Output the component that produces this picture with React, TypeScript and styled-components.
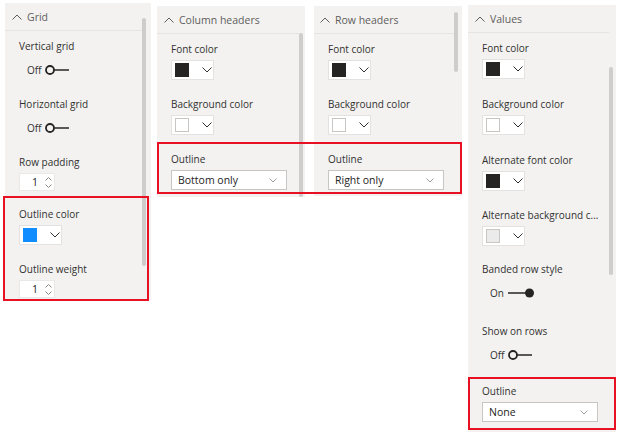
import React from "react";
import styled, { createGlobalStyle } from "styled-components";

const Global = createGlobalStyle`
  html, body { margin: 0; padding: 0; background: #ffffff; }
  body {
    font-family: "Open Sans", "Noto Sans", sans-serif;
    width: 626px;
    height: 442px;
    overflow: hidden;
  }
`;

const Page = styled.div`
  position: relative;
  display: flex;
  align-items: flex-start;
  width: 626px;
  height: 442px;
  padding-left: 5px;
  box-sizing: border-box;
`;

const PanelBox = styled.section<{ $w: number; $h: number; $top: number; $gap: number; $pr: number }>`
  display: flex;
  flex-shrink: 0;
  width: ${(p) => p.$w}px;
  height: ${(p) => p.$h}px;
  margin-top: ${(p) => p.$top}px;
  margin-left: ${(p) => p.$gap}px;
  padding-right: ${(p) => p.$pr}px;
  background: #f3f2f1;
  box-sizing: border-box;
`;

const Main = styled.div`
  flex: 1;
  min-width: 0;
  display: flex;
  flex-direction: column;
`;

const Header = styled.div<{ $pl: number }>`
  display: flex;
  align-items: center;
  gap: 5px;
  height: 27px;
  padding-left: ${(p) => p.$pl}px;
  border-bottom: 1px solid #e6e4e2;
  color: #605e5c;
  font-size: 10.5px;
  white-space: nowrap;
`;

const Content = styled.div`
  display: flex;
  flex-direction: column;
  padding: 8px 0 0 14px;
`;

const Field = styled.div<{ $mb: number }>`
  display: flex;
  flex-direction: column;
  align-items: flex-start;
  margin-bottom: ${(p) => p.$mb}px;
`;

const Label = styled.div`
  font-size: 10px;
  line-height: 14px;
  color: #323130;
  white-space: nowrap;
  margin-bottom: 4px;
`;

const Track = styled.div`
  width: 4px;
  display: flex;
  flex-direction: column;
`;

const Thumb = styled.div<{ $offset: number; $len: number }>`
  margin-top: ${(p) => p.$offset}px;
  height: ${(p) => p.$len}px;
  width: 4px;
  border-radius: 2px;
  background: #cfcdcb;
`;

const Picker = styled.div`
  display: flex;
  align-items: center;
  width: 43px;
  height: 20px;
  box-sizing: border-box;
  background: #ffffff;
  border: 1px solid #e4e2e0;
  padding-left: 3px;
  gap: 13px;
`;

const Swatch = styled.div<{ $color: string; $edge: string }>`
  width: 14px;
  height: 14px;
  box-sizing: border-box;
  background: ${(p) => p.$color};
  border: 1px solid ${(p) => p.$edge};
`;

const Dropdown = styled.div`
  display: flex;
  align-items: center;
  justify-content: space-between;
  width: 116px;
  height: 20px;
  box-sizing: border-box;
  background: #ffffff;
  border: 1px solid #c8c6c4;
  padding: 0 9px 0 6px;
  font-size: 10.5px;
  color: #252423;
  white-space: nowrap;
`;

const Spinner = styled.div`
  display: flex;
  align-items: center;
  justify-content: space-between;
  width: 36px;
  height: 18px;
  box-sizing: border-box;
  background: #ffffff;
  border: 1px solid #eae8e6;
  padding: 0 2px 0 12px;
  font-size: 10.5px;
  color: #252423;
`;

const Arrows = styled.div`
  display: flex;
  flex-direction: column;
  gap: 3px;
`;

const Toggle = styled.div`
  display: flex;
  align-items: center;
  gap: 3px;
  height: 16px;
  margin: 5px 0 0 8px;
  font-size: 10px;
  color: #323130;
`;

const RedBox = styled.div<{ $x: number; $y: number; $w: number; $h: number }>`
  position: absolute;
  left: ${(p) => p.$x}px;
  top: ${(p) => p.$y}px;
  width: ${(p) => p.$w}px;
  height: ${(p) => p.$h}px;
  box-sizing: border-box;
  border: 2px solid #e81123;
  pointer-events: none;
`;

const ChevronUp = () => (
  <svg width="10" height="6" viewBox="0 0 10 6">
    <polyline points="0.5,5.5 5,1 9.5,5.5" fill="none" stroke="#605e5c" strokeWidth="1" />
  </svg>
);

const ChevronDown = ({ color = "#323130", w = 10, h = 6 }: { color?: string; w?: number; h?: number }) => (
  <svg width={w} height={h} viewBox={`0 0 ${w} ${h}`}>
    <polyline points={`0.5,0.5 ${w / 2},${h - 1} ${w - 0.5},0.5`} fill="none" stroke={color} strokeWidth="1" />
  </svg>
);

const SmallArrow = ({ up }: { up?: boolean }) => (
  <svg width="7" height="4" viewBox="0 0 7 4">
    <polyline
      points={up ? "0.5,3.5 3.5,0.5 6.5,3.5" : "0.5,0.5 3.5,3.5 6.5,0.5"}
      fill="none"
      stroke="#8a8886"
      strokeWidth="1"
    />
  </svg>
);

const SwitchIcon = ({ on }: { on?: boolean }) =>
  on ? (
    <svg width="28" height="10" viewBox="0 0 28 10">
      <line x1="1" y1="5" x2="21" y2="5" stroke="#252423" strokeWidth="1.5" />
      <circle cx="22.5" cy="5" r="4.5" fill="#252423" />
    </svg>
  ) : (
    <svg width="25" height="10" viewBox="0 0 25 10">
      <circle cx="5" cy="5" r="4" fill="none" stroke="#252423" strokeWidth="1.8" />
      <line x1="9" y1="5" x2="24" y2="5" stroke="#252423" strokeWidth="1.5" />
    </svg>
  );

type Item =
  | { kind: "picker"; label: string; color: string; edge: string; mb: number }
  | { kind: "toggle"; label: string; on: boolean; mb: number }
  | { kind: "spin"; label: string; value: string; mb: number }
  | { kind: "select"; label: string; value: string; mb: number };

type PanelDef = {
  title: string;
  w: number;
  h: number;
  top: number;
  gap: number;
  pr: number;
  headPl: number;
  thumb: [number, number];
  items: Item[];
};

const panels: PanelDef[] = [
  {
    title: "Grid",
    w: 146,
    h: 297,
    top: 3,
    gap: 0,
    pr: 5,
    headPl: 7,
    thumb: [15, 248],
    items: [
      { kind: "toggle", label: "Vertical grid", on: false, mb: 19 },
      { kind: "toggle", label: "Horizontal grid", on: false, mb: 19 },
      { kind: "spin", label: "Row padding", value: "1", mb: 16 },
      { kind: "picker", label: "Outline color", color: "#118dff", edge: "#118dff", mb: 17 },
      { kind: "spin", label: "Outline weight", value: "1", mb: 0 },
    ],
  },
  {
    title: "Column headers",
    w: 148,
    h: 191,
    top: 6,
    gap: 6,
    pr: 2,
    headPl: 7,
    thumb: [27, 164],
    items: [
      { kind: "picker", label: "Font color", color: "#252423", edge: "#252423", mb: 17 },
      { kind: "picker", label: "Background color", color: "#ffffff", edge: "#c8c6c4", mb: 17 },
      { kind: "select", label: "Outline", value: "Bottom only", mb: 0 },
    ],
  },
  {
    title: "Row headers",
    w: 148,
    h: 190,
    top: 6,
    gap: 9,
    pr: 4,
    headPl: 6,
    thumb: [6, 60],
    items: [
      { kind: "picker", label: "Font color", color: "#252423", edge: "#252423", mb: 17 },
      { kind: "picker", label: "Background color", color: "#ffffff", edge: "#c8c6c4", mb: 17 },
      { kind: "select", label: "Outline", value: "Right only", mb: 0 },
    ],
  },
  {
    title: "Values",
    w: 148,
    h: 427,
    top: 5,
    gap: 6,
    pr: 3,
    headPl: 7,
    thumb: [62, 208],
    items: [
      { kind: "picker", label: "Font color", color: "#252423", edge: "#252423", mb: 18 },
      { kind: "picker", label: "Background color", color: "#ffffff", edge: "#c8c6c4", mb: 18 },
      { kind: "picker", label: "Alternate font color", color: "#252423", edge: "#252423", mb: 17 },
      { kind: "picker", label: "Alternate background c...", color: "#ebebeb", edge: "#c8c6c4", mb: 16 },
      { kind: "toggle", label: "Banded row style", on: true, mb: 23 },
      { kind: "toggle", label: "Show on rows", on: false, mb: 21 },
      { kind: "select", label: "Outline", value: "None", mb: 0 },
    ],
  },
];

const Control = ({ item }: { item: Item }) => {
  switch (item.kind) {
    case "picker":
      return (
        <Picker>
          <Swatch $color={item.color} $edge={item.edge} />
          <ChevronDown />
        </Picker>
      );
    case "toggle":
      return item.on ? (
        <Toggle>
          <span>On</span>
          <SwitchIcon on />
        </Toggle>
      ) : (
        <Toggle>
          <span>Off</span>
          <SwitchIcon />
        </Toggle>
      );
    case "spin":
      return (
        <Spinner>
          <span>{item.value}</span>
          <Arrows>
            <SmallArrow up />
            <SmallArrow />
          </Arrows>
        </Spinner>
      );
    case "select":
      return (
        <Dropdown>
          <span>{item.value}</span>
          <ChevronDown color="#a19f9d" w={8} h={5} />
        </Dropdown>
      );
  }
};

const Panel = ({ def }: { def: PanelDef }) => (
  <PanelBox $w={def.w} $h={def.h} $top={def.top} $gap={def.gap} $pr={def.pr}>
    <Main>
      <Header $pl={def.headPl}>
        <ChevronUp />
        <span>{def.title}</span>
      </Header>
      <Content>
        {def.items.map((item, i) => (
          <Field key={i} $mb={item.mb}>
            <Label>{item.label}</Label>
            <Control item={item} />
          </Field>
        ))}
      </Content>
    </Main>
    <Track>
      <Thumb $offset={def.thumb[0]} $len={def.thumb[1]} />
    </Track>
  </PanelBox>
);

export default function App() {
  return (
    <>
      <Global />
      <Page>
        {panels.map((p) => (
          <Panel key={p.title} def={p} />
        ))}
        <RedBox $x={3} $y={196} $w={146} $h={105} />
        <RedBox $x={157} $y={142} $w={305} $h={52} />
        <RedBox $x={468} $y={377} $w={148} $h={53} />
      </Page>
    </>
  );
}
